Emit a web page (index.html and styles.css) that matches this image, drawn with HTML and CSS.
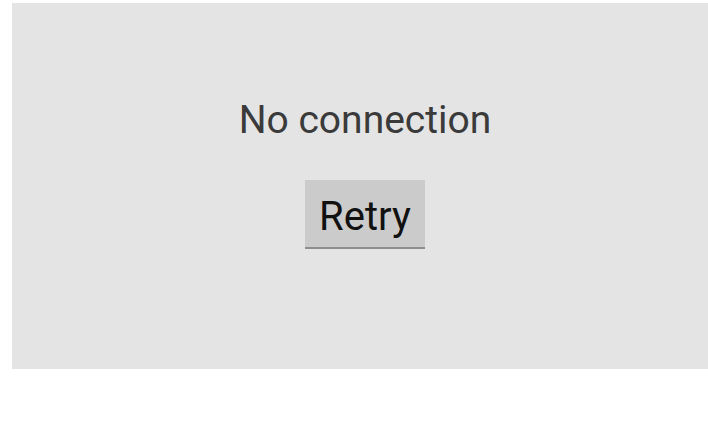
FILE: index.html
```html
<!DOCTYPE html>
<html lang="en">
<head>
    <meta charset="UTF-8">
    <meta name="viewport" content="width=device-width, initial-scale=1.0">
    <title>No connection</title>
    <link rel="stylesheet" href="styles.css">
</head>
<body>

    <div class="error-panel">
        <p class="error-text">No connection</p>
        <button class="retry-btn">Retry</button>
    </div>

</body>
</html>
```

FILE: styles.css
```css
body {
    font-family: Roboto, "Noto Sans", sans-serif;
    background: #ffffff;
    margin: 0;
    padding: 3px 0 0 12px;
}

.error-panel {
    background: #e4e4e4;
    height: 366px;
    display: flex;
    flex-direction: column;
    align-items: center;
    padding-top: 95px;
    box-sizing: border-box;
}

.error-text {
    font-size: 39px;
    color: #3a3a3a;
    margin: 0;
    line-height: 44px;
    padding-left: 10px;
}

.retry-btn {
    margin-top: 38px;
    margin-left: 10px;
    width: 120px;
    height: 69px;
    background: #cbcbcb;
    border: none;
    border-bottom: 2px solid #8e8e8e;
    border-radius: 0;
    font-family: Roboto, "Noto Sans", sans-serif;
    font-size: 40px;
    color: #111111;
    padding: 6px 0 0;
}
```
